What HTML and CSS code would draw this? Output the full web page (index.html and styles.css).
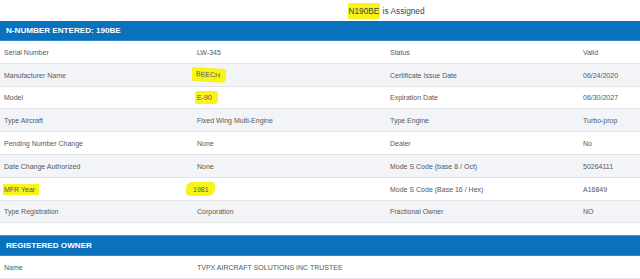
FILE: index.html
```html
<!DOCTYPE html>
<html>
<head>
<meta charset="utf-8">
<link rel="stylesheet" href="styles.css">
</head>
<body>
<div class="page">
  <div class="title"><span class="title-text"><span class="hl hl-title">N190BE</span> is Assigned</span></div>

  <div class="section-head">N-NUMBER ENTERED: 190BE</div>
  <div class="grid">
    <div class="row">
      <div class="cell">Serial Number</div><div class="cell">LW-345</div><div class="cell">Status</div><div class="cell">Valid</div>
    </div>
    <div class="row alt">
      <div class="cell">Manufacturer Name</div><div class="cell"><span class="hl hl-beech">BEECH</span></div><div class="cell">Certificate Issue Date</div><div class="cell">06/24/2020</div>
    </div>
    <div class="row short">
      <div class="cell">Model</div><div class="cell"><span class="hl hl-model">E-90</span></div><div class="cell">Expiration Date</div><div class="cell">06/30/2027</div>
    </div>
    <div class="row alt">
      <div class="cell">Type Aircraft</div><div class="cell">Fixed Wing Multi-Engine</div><div class="cell">Type Engine</div><div class="cell">Turbo-prop</div>
    </div>
    <div class="row">
      <div class="cell">Pending Number Change</div><div class="cell">None</div><div class="cell">Dealer</div><div class="cell">No</div>
    </div>
    <div class="row alt">
      <div class="cell">Date Change Authorized</div><div class="cell">None</div><div class="cell">Mode S Code (base 8 / Oct)</div><div class="cell">50264111</div>
    </div>
    <div class="row">
      <div class="cell"><span class="hl hl-mfr">MFR Year</span></div><div class="cell"><span class="hl hl-year">1981</span></div><div class="cell">Mode S Code (Base 16 / Hex)</div><div class="cell">A16849</div>
    </div>
    <div class="row alt short">
      <div class="cell">Type Registration</div><div class="cell">Corporation</div><div class="cell">Fractional Owner</div><div class="cell">NO</div>
    </div>
  </div>

  <div class="section-head second">REGISTERED OWNER</div>
  <div class="grid">
    <div class="row">
      <div class="cell">Name</div><div class="cell wide">TVPX AIRCRAFT SOLUTIONS INC TRUSTEE</div>
    </div>
  </div>
</div>
</body>
</html>
```
FILE: styles.css
```css
html, body {
  margin: 0;
  padding: 0;
  background: #ffffff;
  overflow: hidden;
}

.page {
  width: 640px;
  font-family: "Liberation Sans", Arial, sans-serif;
  color: #55585c;
}

.title {
  height: 21px;
  display: flex;
  align-items: center;
  justify-content: center;
  box-sizing: border-box;
  padding-left: 134px;
  font-size: 8.3px;
  color: #3c3f44;
}

.section-head {
  height: 19px;
  background: #0a72bd;
  color: #ffffff;
  font-weight: bold;
  font-size: 8.1px;
  display: flex;
  align-items: center;
  padding-left: 6px;
  border-bottom: 1px solid #2f86c6;
}

.section-head.second {
  margin-top: 12px;
  border-top: 1px solid #4f97cf;
  height: 19px;
}

.grid {
  display: flex;
  flex-direction: column;
}

.row {
  display: grid;
  grid-template-columns: 193px 193px 193px 1fr;
  height: 23px;
  box-sizing: border-box;
  border-bottom: 1px solid #e3e4e8;
  background: #ffffff;
}

.row.short {
  height: 22px;
}

.row.alt {
  background: #f3f4f7;
}

.cell {
  display: flex;
  align-items: center;
  padding-left: 4px;
  font-size: 7px;
  white-space: nowrap;
  min-width: 0;
}

.cell.wide {
  grid-column: span 3;
}

.hl {
  background: #f8f41a;
}

.hl-title {
  padding: 3px 1px 3px 0;
  margin-left: -1px;
  border-radius: 1px 2px 3px 1px;
}

.hl-beech {
  padding: 3px 6px 4px 4px;
  margin-left: -5px;
  border-radius: 2px 1px 5px 1px;
  transform: skewY(4deg);
  display: inline-block;
}

.hl-model {
  padding: 3px 6px 3px 2px;
  margin-left: -2px;
  border-radius: 3px 2px 4px 2px;
  display: inline-block;
}

.hl-mfr {
  padding: 2px 4px 2px 1px;
  margin-left: -1px;
  display: inline-block;
}

.hl-year {
  padding: 4px 6px 3px 7px;
  margin-left: -11px;
  border-radius: 6px 3px 7px 4px;
  display: inline-block;
}
```
